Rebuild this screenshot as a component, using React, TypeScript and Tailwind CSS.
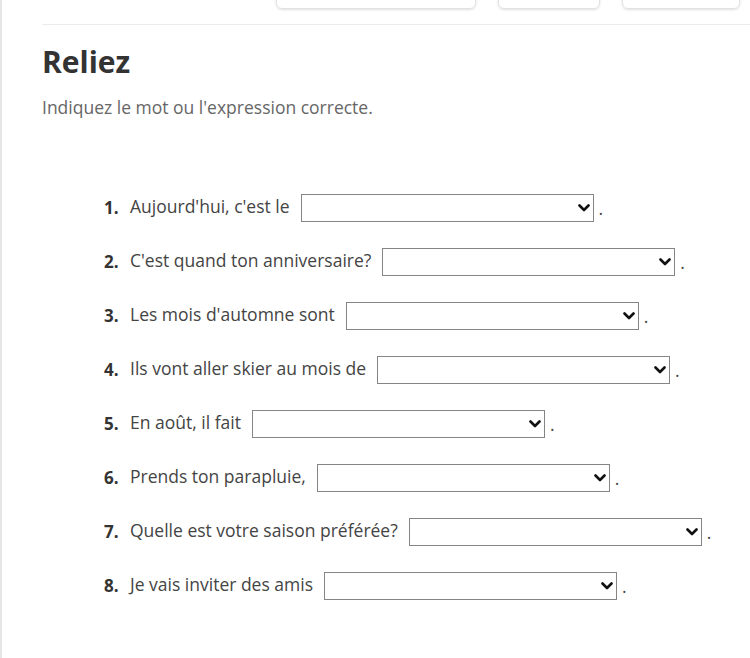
const questions = [
  "Aujourd'hui, c'est le",
  "C'est quand ton anniversaire?",
  "Les mois d'automne sont",
  "Ils vont aller skier au mois de",
  "En août, il fait",
  "Prends ton parapluie,",
  "Quelle est votre saison préférée?",
  "Je vais inviter des amis",
];

function Chevron() {
  return (
    <svg width="12" height="8" viewBox="0 0 12 8" className="absolute right-[4px] top-[10px] pointer-events-none">
      <polyline points="1.5,1.5 6,6 10.5,1.5" fill="none" stroke="#111" strokeWidth="2.6" strokeLinecap="round" strokeLinejoin="round" />
    </svg>
  );
}

export default function App() {
  return (
    <div className="min-h-[658px] bg-white border-l-2 border-[#e6e6e6] font-['Open_Sans',sans-serif] text-[#444] overflow-hidden">
      <div className="pl-10">
        {/* toolbar buttons, scrolled mostly out of view */}
        <div className="flex justify-end gap-[22px] pr-[10px] h-[25px] border-b border-[#ececec] items-end pb-[15px]">
          <div className="w-[200px] h-[30px] -mt-[21px] rounded-b-md border border-[#e2e2e2] shadow-sm" />
          <div className="w-[102px] h-[30px] -mt-[21px] rounded-b-md border border-[#e2e2e2] shadow-sm" />
          <div className="w-[118px] h-[30px] -mt-[21px] rounded-b-md border border-[#e2e2e2] shadow-sm" />
        </div>
      </div>
      <div className="pl-10 pt-[17px]">
        <h1 className="text-[30px] font-bold text-[#333] leading-[40px]">Reliez</h1>
        <p className="mt-[13px] text-[17.5px] text-[#666] leading-[24px]">Indiquez le mot ou l'expression correcte.</p>
        <ol className="mt-[62px] pl-[62px] text-[17.5px]">
          {questions.map((q, i) => (
            <li key={i} className="flex items-center h-[54px]">
              <span className="w-[26px] font-bold text-[#333] text-[17px]">{i + 1}.</span>
              <span className="-mt-[4px]">{q}</span>
              <div className="relative ml-[11px]">
                <select className="appearance-none block w-[293px] h-[28px] border border-[#858585] bg-white text-[14px]" defaultValue="">
                  <option value=""></option>
                </select>
                <Chevron />
              </div>
              <span className="ml-[5px]">.</span>
            </li>
          ))}
        </ol>
      </div>
    </div>
  );
}
